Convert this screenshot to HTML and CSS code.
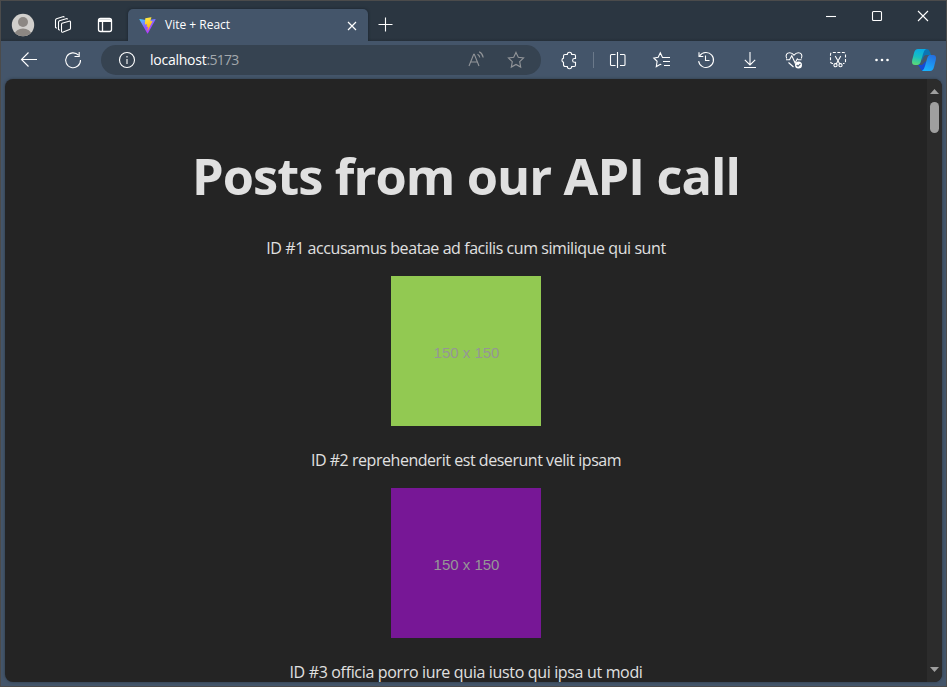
FILE: index.html
```html
<!DOCTYPE html>
<html lang="en">
<head>
<meta charset="utf-8">
<title>Vite + React</title>
<link rel="stylesheet" href="styles.css">
</head>
<body>
<div class="window">
  <header class="titlebar">
    <div class="title-tools">
      <svg class="avatar" viewBox="0 0 24 24"><defs><clipPath id="av"><circle cx="12" cy="12" r="11.2"/></clipPath></defs><g clip-path="url(#av)"><path fill="#d1cfcc" d="M0 0h24v24H0z"/><circle cx="12" cy="9" r="5" fill="#8c8783"/><ellipse cx="12" cy="21" rx="8.2" ry="5.4" fill="#8c8783"/></g></svg>
      <svg class="icon" viewBox="0 0 20 20"><path d="M9 8.2 16 6.2q1.5-.3 1.5 1v6q0 1-1 1.3l-6.3 2.6q-1.7.6-1.7-1V9.4q0-.9.5-1.2M6.8 15.2 5.5 14.5V7.3q0-1.1 1-1.5l6.6-2.1q1.2-.3 1.5.7M3.8 13.2 2.5 12.5V5.2q0-1.1 1-1.5l6.3-2q1.2-.3 1.5.6"/></svg>
      <svg class="icon bold" viewBox="0 0 20 20"><rect x="3.5" y="3.5" width="13" height="13" rx="2"/><path d="M3.5 5h13M3.5 6.3h13M7.5 6.5v10"/></svg>
    </div>
    <div class="tab">
      <svg class="vite" viewBox="0 0 410 404"><defs><linearGradient id="va" x1="0" y1="0" x2=".6" y2="1"><stop stop-color="#41d1ff"/><stop offset=".55" stop-color="#8b5cff"/><stop offset="1" stop-color="#bd34fe"/></linearGradient><linearGradient id="vb" x1=".4" y1="0" x2=".6" y2="1"><stop stop-color="#ffea45"/><stop offset="1" stop-color="#ffa800"/></linearGradient></defs><path fill="url(#va)" d="M400 60 216 389c-4 7-14 7-18 0L10 60C6 52 12 43 21 44l184 33 184-33c9-1 15 8 11 16z"/><path fill="url(#vb)" d="m292 2-136 26c-3 1-5 3-5 5l-8 141c0 4 3 6 7 5l38-9c4-1 7 3 6 6l-11 56c-1 3 3 7 6 6l24-8c4-1 7 3 6 7l-18 86c-1 6 6 9 9 4l116-229c1-3-1-7-5-7l-42 8c-3 1-6-3-5-6l25-86c1-3-3-6-7-5z"/></svg>
      <span class="tab-title">Vite + React</span>
      <svg class="icon tab-close" viewBox="0 0 16 16"><path d="m4 4 8 8M12 4l-8 8"/></svg>
    </div>
    <svg class="icon new-tab" viewBox="0 0 16 16"><path d="M7.5.5v14M.5 7.5h14"/></svg>
    <div class="controls">
      <svg class="icon" viewBox="0 0 12 12"><path d="M1 6.5h10"/></svg>
      <svg class="icon" viewBox="0 0 12 12"><rect x="1.5" y="1.5" width="9" height="9" rx="1"/></svg>
      <svg class="icon" viewBox="0 0 12 12"><path d="m1 1 10 10M11 1 1 11"/></svg>
    </div>
  </header>

  <nav class="toolbar">
    <span class="btn"><svg class="icon" viewBox="0 0 20 20"><path d="M18 9.5H2.5M9.5 2.5l-7 7 7 7"/></svg></span>
    <span class="btn"><svg class="icon" viewBox="0 0 20 20"><path d="M15.5 5.2A7.4 7.4 0 1 0 17.5 10M16.2 2v4.5h-4.7"/></svg></span>
    <div class="address">
      <svg class="icon info" viewBox="0 0 20 20"><circle cx="10" cy="10" r="7.5"/><path d="M10 9v5M10 6v1.4"/></svg>
      <span class="url">localhost<span class="port">:5173</span></span>
      <svg class="icon muted read" viewBox="0 0 20 20"><path d="M3 16 7.7 4.3h.6L13 16M4.6 12h6.8M11.5 4.2q2 1 2.3 3.3M13.2 1.8q3.5 1.8 4 5.7"/></svg>
      <svg class="icon muted" viewBox="0 0 20 20"><path d="m10 2.4 2.3 4.9 5.3.7-3.9 3.7 1 5.4-4.7-2.6-4.7 2.6 1-5.4L2.4 8l5.3-.7z"/></svg>
    </div>
    <div class="tools">
      <span class="btn"><svg class="icon" viewBox="0 0 20 20"><path d="M6 4.5h2.3a2.2 2.2 0 0 1 4.4 0h2.6q1.2 0 1.2 1.2v2.8h-1a1.9 1.9 0 0 0 0 3.8h1v3q0 1.2-1.2 1.2h-2.6a2.2 2.2 0 0 1-4.4 0H6.2q-1.7 0-1.7-1.7v-2.5a2.2 2.2 0 0 1 0-4.2V6q0-1.5 1.5-1.5"/></svg></span>
      <i class="separator"></i>
      <span class="btn"><svg class="icon" viewBox="0 0 20 20"><path d="M9.5 2v16M7.5 4.5h-4q-1 0-1 1v9q0 1 1 1h4M12 4.5h4q1 0 1 1v9q0 1-1 1h-4"/></svg></span>
      <span class="btn"><svg class="icon" viewBox="0 0 20 20"><path d="M11.5 7.5h-1L8.3 2.8 6.2 7.2 1.8 8l3.3 3.3-.8 5.3 4-2.3 1 .5M11.5 7.5H18M11 11.5h7M12 15.5h6"/></svg></span>
      <span class="btn"><svg class="icon" viewBox="0 0 20 20"><path d="M3.8 5.8a7.5 7.5 0 1 1-1.2 5.4M3 2.2v4.3h4.3M9.5 5.5v5h4"/></svg></span>
      <span class="btn"><svg class="icon" viewBox="0 0 20 20"><path d="M10 2v13M4.8 9.8 10 15l5.2-5.2M4 17.5h12"/></svg></span>
      <span class="btn"><svg class="icon" viewBox="0 0 20 20"><path d="M2.7 8.5C1 5 3 2.7 5.7 2.7c2.3 0 3.4 1.2 4.3 2.4 1-1.2 2-2.4 4.3-2.4 2.7 0 4.7 2.3 3 5.8M2 9.8h3.5l2.3-4 3.3 7.2 2.2-4.2 1 1H17.5M4.5 12.5 9.5 17"/><circle cx="14.5" cy="15" r="3.5" fill="#fff" stroke="none"/><path stroke="#44556a" d="m12.7 15 1.3 1.3 2.4-2.5"/></svg></span>
      <span class="btn"><svg class="icon" viewBox="0 0 20 20"><path stroke-dasharray="3 1.5" d="M5 13.5h-.5q-2 0-2-2v-7q0-2 2-2h11q2 0 2 2v7q0 2-2 2H15"/><path d="m7.2 6 4.6 8M12.8 6l-4.6 8"/><circle cx="7.5" cy="15.2" r="1.6"/><circle cx="12.5" cy="15.2" r="1.6"/></svg></span>
      <span class="btn"><svg class="icon dots" viewBox="0 0 20 20"><circle cx="4.5" cy="10" r="1.3"/><circle cx="10" cy="10" r="1.3"/><circle cx="15.5" cy="10" r="1.3"/></svg></span>
      <svg class="copilot" viewBox="0 0 24 24"><defs><linearGradient id="ca" x1=".5" y1="0" x2=".3" y2="1"><stop stop-color="#08a9e3"/><stop offset=".5" stop-color="#18bfc0"/><stop offset="1" stop-color="#5cdb76"/></linearGradient><linearGradient id="cb" x1=".7" y1="0" x2=".3" y2="1"><stop stop-color="#246fe0"/><stop offset="1" stop-color="#18b4ff"/></linearGradient></defs><path fill="#0b75b4" d="M10 1h5q2 0 3 3l1 3h-5q-2 0-3 3l-1 3z"/><path fill="#154bd5" d="M6 17h4l4-4-1 10h-2q-2 0-3-3z"/><path fill="url(#ca)" d="M6 1h8q-2 1-3 5l-2 7q-1 4-4 4H3q-3 0-3-3 0-2 1-5l1-4Q3 1 6 1z"/><path fill="url(#cb)" d="M18 7h3q3 0 3 3 0 2-1 5l-1 4q-1 4-4 4h-8q2-1 3-5l2-7q1-4 3-4z"/></svg>
    </div>
  </nav>

  <div class="viewport">
    <main class="page">
      <h1>Posts from our API call</h1>
      <p class="post-1">ID #1 accusamus beatae ad facilis cum similique qui sunt</p>
      <div class="thumb green">150 x 150</div>
      <p class="post-2">ID #2 reprehenderit est deserunt velit ipsam</p>
      <div class="thumb purple">150 x 150</div>
      <p class="post-3">ID #3 officia porro iure quia iusto qui ipsa ut modi</p>
    </main>
    <div class="scrollbar">
      <svg class="arrow" viewBox="0 0 9 5"><path d="M4.5 0 9 5H0z"/></svg>
      <div class="handle"></div>
      <svg class="arrow down" viewBox="0 0 9 5"><path d="M0 0h9L4.5 5z"/></svg>
    </div>
  </div>
</div>
</body>
</html>
```
FILE: styles.css
```css
* { box-sizing: border-box; }
body { margin: 0; font-family: "Open Sans", "Noto Sans", sans-serif; overflow: hidden; }
.window {
  width: 947px; height: 687px;
  display: flex; flex-direction: column;
  background: #44556a;
  border: 1px solid #4b4b4b;
}
.icon { display: block; flex: none; width: 20px; height: 20px; fill: none; stroke: #fff; stroke-width: 1.1; }
.icon.bold { stroke-width: 1.3; }
.icon.muted { stroke: #929599; }

.titlebar { flex: none; height: 40px; display: flex; background: linear-gradient(#2b3641 37px, #252f39); }
.title-tools { width: 127px; flex: none; display: flex; align-items: center; padding: 8px 0 0 10px; gap: 18px; }
.title-tools .icon + .icon { margin-left: 4px; }
.avatar { width: 24px; height: 24px; flex: none; }
.tab {
  width: 240px; margin-top: 8px; flex: none;
  display: flex; align-items: center; padding: 0 8px 0 11px;
  background: #44556a; border-radius: 5px 5px 0 0;
  box-shadow: 0 0 3px #18212b; clip-path: inset(-3px -3px 0 -3px);
}
.vite { width: 17px; height: 17px; flex: none; }
.tab-title { margin-left: 9px; font-size: 12px; line-height: 16px; color: #fff; white-space: nowrap; }
.tab-close { width: 16px; height: 16px; margin: 1px 0 0 auto; stroke-width: 1.2; }
.new-tab { width: 16px; height: 16px; margin: 16px 0 0 10px; }
.controls { display: flex; margin: 9px 17px 0 auto; gap: 34px; }
.controls .icon { width: 12px; height: 12px; }

.toolbar { flex: none; height: 38px; display: flex; align-items: center; padding-left: 6px; }
.btn { width: 44px; flex: none; display: flex; justify-content: center; }
.address {
  width: 440px; height: 30px; flex: none; margin-left: 6px;
  display: flex; align-items: center; padding: 0 15px 0 16px;
  border-radius: 15px; background: #364351;
}
.url { margin: 0 auto 0 13px; font-size: 14px; line-height: 20px; letter-spacing: -0.25px; color: #fff; white-space: nowrap; }
.port { color: #a3a8ad; letter-spacing: -0.7px; }
.read { margin-right: 20px; }
.tools { display: flex; align-items: center; margin-left: 6px; }
.separator { width: 1px; height: 16px; margin: 0 2px; background: #6b798a; }
.dots { fill: #fff; stroke: none; }
.copilot { width: 24px; height: 24px; margin-left: 8px; }

.viewport {
  flex: none; width: 937px; height: 603px; margin: 0 4px;
  display: flex; overflow: hidden;
  border-radius: 8px; background: #242424;
  box-shadow: 0 0 3px #2c3947;
}
.page { width: 922px; flex: none; padding-top: 32px; text-align: center; color: #e0e0e0; }
h1 { margin: 37.3px 0 31.3px; font-size: 50.5px; line-height: 56.3px; font-weight: 700; letter-spacing: -0.9px; white-space: nowrap; }
p { margin: 0; font-size: 16px; line-height: 24px; white-space: nowrap; }
.post-1 { letter-spacing: -0.43px; }
.post-2 { letter-spacing: -0.46px; }
.post-3 { letter-spacing: -0.34px; }
.thumb {
  width: 150px; height: 150px; margin: 16px auto 22px; padding: 3px 0 0 1px;
  display: flex; align-items: center; justify-content: center;
  font: 15px "Liberation Sans", Arial, sans-serif; color: #969696;
}
.green { background: #92c952; }
.purple { background: #771796; }
.scrollbar { width: 15px; display: flex; flex-direction: column; align-items: center; padding: 10px 0 10px; background: #2c2c2c; }
.arrow { width: 9px; height: 5px; fill: #9f9f9f; }
.handle { width: 9px; height: 31px; margin-top: 8px; border-radius: 5px; background: #9f9f9f; }
.arrow.down { margin-top: auto; }
```
